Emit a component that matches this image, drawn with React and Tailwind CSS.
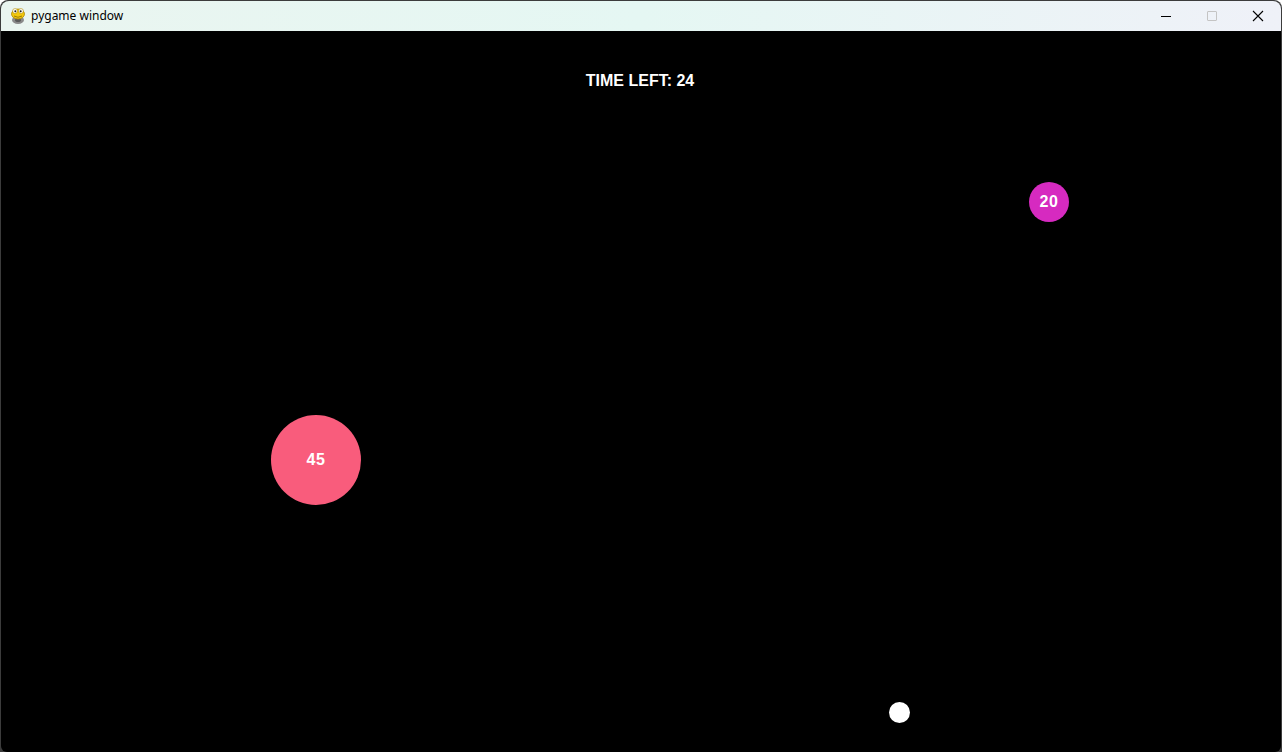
import React from "react";

function PygameIcon() {
    return (
        <svg width="16" height="18" viewBox="0 0 16 18">
            <ellipse cx="8" cy="13" rx="6" ry="4" fill="#8a8a8a" />
            <ellipse cx="8" cy="13" rx="3" ry="2" fill="#5a5a5a" />
            <ellipse cx="8" cy="7" rx="6.5" ry="5" fill="#f2c80c" stroke="#b08a00" strokeWidth="0.8" />
            <circle cx="5" cy="4" r="2.4" fill="#fff" stroke="#b08a00" strokeWidth="0.6" />
            <circle cx="11" cy="4" r="2.4" fill="#fff" stroke="#b08a00" strokeWidth="0.6" />
            <circle cx="5.3" cy="4.2" r="1" fill="#222" />
            <circle cx="10.7" cy="4.2" r="1" fill="#222" />
            <path d="M4 9 Q8 11.5 12 9" stroke="#8a6a00" strokeWidth="0.8" fill="none" />
        </svg>
    );
}

function TitleBar() {
    return (
        <div className="h-[30px] flex items-center bg-gradient-to-r from-[#eaf5f0] via-[#e5f7f3] to-[#eff1f8] rounded-t-[8px]">
            <div className="pl-[9px] pr-[5px] flex items-center">
                <PygameIcon />
            </div>
            <span className="text-[12px] text-black" style={{ fontFamily: '"Segoe UI", "Noto Sans", "Liberation Sans", sans-serif' }}>pygame window</span>
            <div className="ml-auto flex h-full">
                <div className="w-[46px] flex items-center justify-center">
                    <div className="w-[10px] h-[1px] bg-black" />
                </div>
                <div className="w-[46px] flex items-center justify-center">
                    <div className="w-[10px] h-[10px] border border-[#c4c4c4] rounded-[1px]" />
                </div>
                <div className="w-[46px] flex items-center justify-center">
                    <svg width="12" height="12" viewBox="0 0 12 12">
                        <path d="M1 1 L11 11 M11 1 L1 11" stroke="#000" strokeWidth="1.1" />
                    </svg>
                </div>
            </div>
        </div>
    );
}

const balls = [
    { x: 315, y: 429, r: 45, color: "bg-[#f95c7c]", label: "45" },
    { x: 1048, y: 171, r: 20, color: "bg-[#d62ac0]", label: "20" },
];

export default function App() {
    return (
        <div className="w-[1282px] h-[752px] bg-[#3c3c3c] p-[1px] pb-0 rounded-t-[8px] overflow-hidden" style={{ fontFamily: '"Liberation Sans", Arial, sans-serif' }}>
            <TitleBar />
            <div className="relative h-[721px] bg-black rounded-b-[6px]">
                <div className="pt-[40px] flex justify-center">
                    <span className="text-white font-bold text-[16px] leading-[20px] pr-[2px]">TIME LEFT: 24</span>
                </div>
                {balls.map((b) => (
                    <div
                        key={b.label}
                        className={"absolute rounded-full flex items-center justify-center text-white font-bold text-[16px] tracking-[0.5px] " + b.color}
                        style={{ left: b.x - b.r, top: b.y - b.r, width: b.r * 2, height: b.r * 2 }}
                    >
                        {b.label}
                    </div>
                ))}
                <div className="absolute left-[888px] top-[671px] w-[21px] h-[21px] rounded-full bg-white" />
            </div>
        </div>
    );
}
